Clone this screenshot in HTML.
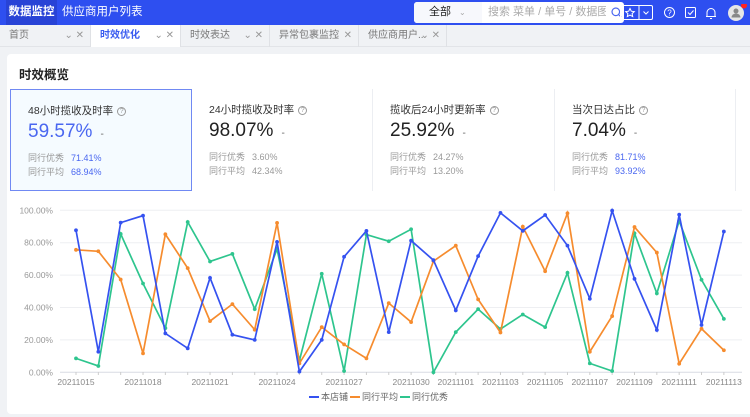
<!DOCTYPE html>
<html><head><meta charset="utf-8">
<style>
*{margin:0;padding:0;box-sizing:border-box}
body{width:750px;height:417px;overflow:hidden;background:#f0f2f5;font-family:"Liberation Sans","Noto Sans CJK SC",sans-serif;position:relative}
.top{position:absolute;left:0;top:0;width:750px;height:25px;background:#2e4ff0}
.brand{position:absolute;left:6px;top:0;width:51px;height:25px;background:#2843d6;color:#fff;font-size:11.5px;font-weight:bold;line-height:25px;text-align:center}
.sub{position:absolute;left:62px;top:0;color:#fff;font-size:11.5px;line-height:25px}
.search{position:absolute;left:414px;top:2px;width:210px;height:21px;background:#fff;border-radius:3px}
.search .all{position:absolute;left:0;top:0;width:68px;height:21px;background:#f7f8fc;border-radius:3px 0 0 3px;font-size:11px;line-height:21px;padding-left:15px;color:#222}
.search .all span{color:#aaa;font-size:8px;margin-left:8px}
.search .ph{position:absolute;left:74px;top:0;font-size:11px;line-height:21px;color:#aaa;white-space:nowrap;width:118px;overflow:hidden}
.tabs{position:absolute;left:0;top:25px;width:750px;height:22px;background:#f0f2f5;border-bottom:1px solid #e2e4e8}
.tab{position:absolute;top:0;height:22px;font-size:10px;line-height:22px;color:#777;padding-left:9px;border-right:1px solid #dfe1e5}
.tab.act{background:#fff;color:#3a5cf0;font-weight:bold}
.tab i{position:absolute;right:6px;top:0;font-style:normal;color:#999;font-size:10px;font-weight:normal}
.card{position:absolute;left:7px;top:54px;width:760px;height:360px;background:#fff;border-radius:4px}
.title{position:absolute;left:19px;top:64px;font-size:12.5px;font-weight:bold;color:#222}
.m{position:absolute;top:89px;height:102px;width:182px}
.m.act{background:#f5fbff;border:1px solid #7089f3}
.m .l{position:absolute;left:17px;top:13px;font-size:10.5px;color:#333}
.m .l b{display:inline-block;width:9px;height:9px;border:1px solid #999;border-radius:50%;font-size:7px;line-height:8px;text-align:center;color:#999;font-weight:normal;margin-left:4px;vertical-align:1px}
.m .v{position:absolute;left:17px;top:31px;font-size:19px;color:#222}
.m .v small{font-size:10px;color:#666;margin-left:8px}
.m .r{position:absolute;left:17px;font-size:9px;color:#999}
.m .r span{margin-left:7px;color:#999}
.m .r span.b{color:#4a67f0}
.div{position:absolute;top:89px;width:1px;height:102px;background:#eceef2}
</style></head><body>
<div class="top">
 <div class="brand">数据监控</div>
 <div class="sub">供应商用户列表</div>
 <div class="search"><div class="all">全部<span>⌄</span></div><div class="ph">搜索 菜单 / 单号 / 数据图表</div>
  <svg style="position:absolute;left:197px;top:5px" width="11" height="11" viewBox="0 0 11 11"><circle cx="4.8" cy="4.8" r="3.8" fill="none" stroke="#4a67f0" stroke-width="1.2"/><path d="M7.5 7.5L10 10" stroke="#4a67f0" stroke-width="1.2"/></svg>
 </div>
 <svg style="position:absolute;left:620px;top:4px" width="130" height="18" viewBox="0 0 130 18">
  <rect x="0.5" y="1.5" width="32" height="14" rx="1.5" fill="none" stroke="#fff"/>
  <line x1="19" y1="1.5" x2="19" y2="15.5" stroke="#fff"/>
  <path d="M10 4.5l1.3 2.7 3 .4-2.2 2 .6 3-2.7-1.5-2.7 1.5.6-3-2.2-2 3-.4z" fill="none" stroke="#fff" stroke-width="1"/>
  <path d="M23.5 7.5l2.5 2.5 2.5-2.5" fill="none" stroke="#fff"/>
  <circle cx="49.5" cy="8.5" r="5" fill="none" stroke="#fff"/><text x="49.5" y="11.5" font-size="8" fill="#fff" text-anchor="middle" font-family="Liberation Sans">?</text>
  <rect x="65.5" y="3.5" width="10" height="10" rx="1" fill="none" stroke="#fff"/><path d="M68 8.5l2 2 3.5-4" fill="none" stroke="#fff"/>
  <path d="M87 12.5v-4a4 4 0 0 1 8 0v4zM86 12.5h10M90 14.5h2" fill="none" stroke="#fff"/>
  <circle cx="116" cy="9" r="8" fill="#e6e6e6"/><circle cx="116" cy="7" r="2.5" fill="#888"/><path d="M111.5 13.5a4.5 4 0 0 1 9 0z" fill="#888"/>
  <circle cx="124" cy="1.5" r="3" fill="#f22"/>
 </svg>
</div>
<div class="tabs">
 <div class="tab" style="left:0;width:91px">首页<i>⌄ ✕</i></div>
 <div class="tab act" style="left:91px;width:90px">时效优化<i>⌄ ✕</i></div>
 <div class="tab" style="left:181px;width:89px">时效表达<i>⌄ ✕</i></div>
 <div class="tab" style="left:270px;width:89px">异常包裹监控<i>⌄ ✕</i></div>
 <div class="tab" style="left:359px;width:88px">供应商用户...<i>⌄ ✕</i></div>
</div>
<div class="card"></div>
<div class="title">时效概览</div>
<div class="m act" style="left:10px"><div class="l">48小时揽收及时率<b>?</b></div><div class="v" style="color:#4a67f0">59.57%<small>-</small></div><div class="r" style="top:61px">同行优秀<span class="b">71.41%</span></div><div class="r" style="top:75px">同行平均<span class="b">68.94%</span></div></div>
<div class="m" style="left:192px"><div class="l">24小时揽收及时率<b>?</b></div><div class="v">98.07%<small>-</small></div><div class="r" style="top:61px">同行优秀<span>3.60%</span></div><div class="r" style="top:75px">同行平均<span>42.34%</span></div></div>
<div class="div" style="left:372px"></div>
<div class="m" style="left:373px"><div class="l">揽收后24小时更新率<b>?</b></div><div class="v">25.92%<small>-</small></div><div class="r" style="top:61px">同行优秀<span>24.27%</span></div><div class="r" style="top:75px">同行平均<span>13.20%</span></div></div>
<div class="div" style="left:554px"></div>
<div class="m" style="left:555px"><div class="l">当次日达占比<b>?</b></div><div class="v">7.04%<small>-</small></div><div class="r" style="top:61px">同行优秀<span class="b">81.71%</span></div><div class="r" style="top:75px">同行平均<span class="b">93.92%</span></div></div>
<div class="div" style="left:735px"></div>
<svg id="ch" style="position:absolute;left:0;top:0" width="750" height="417"></svg>
<script>
var B=[87.7,12.7,92.4,96.7,24,14.8,58.3,23.2,20,80.5,0.4,20,71.3,87.3,24.8,81.3,69.2,38.2,71.7,98.4,87.3,97.1,78.2,45.4,99.8,57.7,26.1,97.3,29.2,86.9];
var O=[75.6,74.7,57.3,11.7,85.2,64.3,31.6,42.1,26.3,92.2,5.5,27.9,17.2,8.6,42.7,31,68.6,78.2,45,24.6,89.9,62.4,98.2,12.7,34.7,89.7,73.9,5.3,26.9,13.6];
var G=[8.6,3.9,85.4,54.8,27.3,92.8,68.4,73.1,39,76.2,7.2,60.8,0.8,85,80.9,88.3,0,24.8,39,26.7,35.7,27.9,61.4,5.5,0.8,85.8,48.7,93.4,57.1,33];
function X(i){return 76+i*22.34}function Y(v){return 372.3-v*1.62}
var s='';
for(var k=0;k<=5;k++){var y=Y(k*20);s+='<line x1="60" x2="742" y1="'+y+'" y2="'+y+'" stroke="'+(k?'#eeeff2':'#d8dbe3')+'"/>';
s+='<text x="53" y="'+(y+3)+'" font-size="8.5" fill="#999" text-anchor="end" font-family="Liberation Sans">'+(k*20)+'.00%</text>';}
for(var i=0;i<30;i++){s+='<line x1="'+X(i)+'" x2="'+X(i)+'" y1="372" y2="375" stroke="#ccc"/>';}
var lab=['20211015','20211018','20211021','20211024','20211027','20211030','20211101','20211103','20211105','20211107','20211109','20211111','20211113'];
var idx=[0,3,6,9,12,15,17,19,21,23,25,27,29];
for(var j=0;j<lab.length;j++)s+='<text x="'+X(idx[j])+'" y="385" font-size="8.5" fill="#888" text-anchor="middle" font-family="Liberation Sans">'+lab[j]+'</text>';
function line(d,c){var p=d.map(function(v,i){return X(i)+','+Y(v)}).join(' ');s+='<polyline points="'+p+'" fill="none" stroke="'+c+'" stroke-width="1.7"/>';d.forEach(function(v,i){s+='<circle cx="'+X(i)+'" cy="'+Y(v)+'" r="1.9" fill="'+c+'"/>'})}
line(G,'#2ec58e');line(O,'#f68c2e');line(B,'#3552f0');
s+='<line x1="309" x2="319" y1="397" y2="397" stroke="#3552f0" stroke-width="2"/><text x="321" y="400" font-size="9" fill="#666" font-family="Liberation Sans,Noto Sans CJK SC">本店铺</text>';
s+='<line x1="350" x2="360" y1="397" y2="397" stroke="#f68c2e" stroke-width="2"/><text x="362" y="400" font-size="9" fill="#666" font-family="Liberation Sans,Noto Sans CJK SC">同行平均</text>';
s+='<line x1="400" x2="410" y1="397" y2="397" stroke="#2ec58e" stroke-width="2"/><text x="412" y="400" font-size="9" fill="#666" font-family="Liberation Sans,Noto Sans CJK SC">同行优秀</text>';
document.getElementById('ch').innerHTML=s;
</script>
</body></html>
